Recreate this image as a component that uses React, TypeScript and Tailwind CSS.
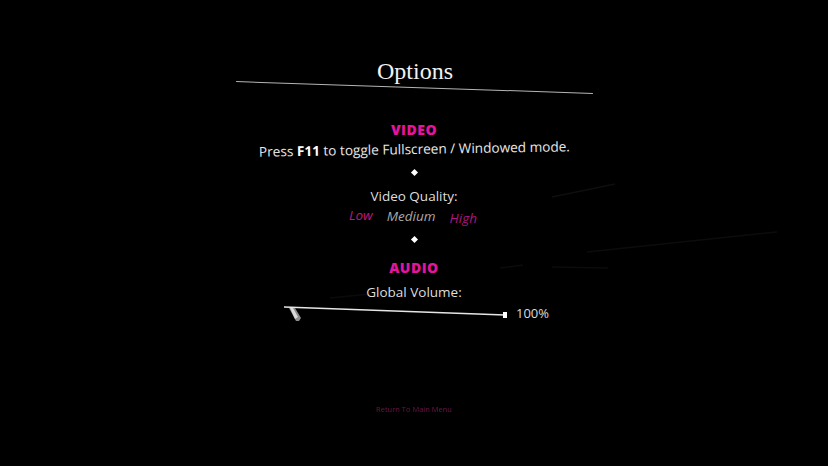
import React from 'react'

const sans = { fontFamily: '"Open Sans", "Noto Sans", sans-serif' }

// Faint streaks drawn on the backdrop canvas
const Streaks: React.FC = () => (
	<svg className="pointer-events-none absolute inset-0" width={828} height={466}>
		<line x1={552} y1={197} x2={615} y2={184} stroke="#0e0e0e" strokeWidth={1.5} />
		<line x1={587} y1={252} x2={777} y2={232} stroke="#0c0c0c" strokeWidth={1.5} />
		<line x1={500} y1={268} x2={523} y2={265} stroke="#0b0b0b" strokeWidth={1.5} />
		<line x1={552} y1={267} x2={608} y2={268} stroke="#0b0b0b" strokeWidth={1.5} />
		<line x1={330} y1={298} x2={370} y2={294} stroke="#0a0a0a" strokeWidth={1.5} />
	</svg>
)

const Diamond: React.FC<{ className?: string }> = ({ className }) => (
	<div className={`h-[5px] w-[5px] rotate-45 bg-white ${className ?? ''}`} />
)

const Heading: React.FC<{ children: React.ReactNode; className?: string }> = ({ children, className }) => (
	<div
		className={`flex h-[17px] items-center text-[14px] font-extrabold tracking-[0.5px] text-[#e4149c] ${className ?? ''}`}
		style={sans}
	>
		{children}
	</div>
)

const VolumeSlider: React.FC = () => (
	<div className="mt-[2px] flex h-[20px] items-center gap-[7px] pl-[4px]">
		<svg width={226} height={18} viewBox="0 0 226 18" className="mt-[-3px]">
			<line x1={1} y1={3} x2={222} y2={11} stroke="#e6e6e6" strokeWidth={1.3} />
			<rect x={220} y={8} width={4} height={6} fill="#fff" />
			{/* grab cursor */}
			<polygon points="6,4 12,4 18,14 16,17 13,17" fill="#8c8c8c" />
			<polygon points="7,4 10,4 15,13 12,15" fill="#dadada" />
		</svg>
		<span className="text-[13px] text-[#dcdcdc]" style={sans}>
			100%
		</span>
	</div>
)

export default function App() {
	return (
		<div className="relative h-[466px] w-[828px] overflow-hidden bg-black">
			<Streaks />
			<div className="relative flex flex-col items-center pt-[56px]">
				<div
					className="h-[30px] pl-[2px] text-[24px] leading-[30px] text-[#f2f2f2]"
					style={{ fontFamily: '"Liberation Serif", "DejaVu Serif", serif' }}
				>
					Options
				</div>
				<div className="ml-[1px] mt-[1px] h-px w-[357px] rotate-[1.9deg] bg-[#b5b5b5]" />

				<Heading className="mt-[33px]">VIDEO</Heading>
				<div
					className="mt-[3px] flex h-[16px] -rotate-[1deg] items-center text-[13.6px] leading-[16px] text-[#e8e8e8]"
					style={sans}
				>
					<span>
						Press <b className="font-bold text-white">F11</b> to toggle Fullscreen / Windowed mode.
					</span>
				</div>

				<Diamond className="mt-[13px]" />

				<div className="mt-[11px] flex h-[20px] items-center text-[13.5px] text-[#dedede]" style={sans}>
					Video Quality:
				</div>
				<div className="flex h-[20px] items-center gap-[14px] pr-[2px] text-[13.5px] italic" style={sans}>
					<span className="-translate-y-[1px] text-[#c0177c]">Low</span>
					<span className="text-[#a9a9a9]">Medium</span>
					<span className="translate-y-[2px] text-[#b0167f]">High</span>
				</div>

				<Diamond className="mt-[11px]" />

				<Heading className="mt-[17px]">AUDIO</Heading>
				<div className="mt-[6px] flex h-[20px] items-center text-[13.5px] text-[#dedede]" style={sans}>
					Global Volume:
				</div>
				<VolumeSlider />

				<div className="mt-[80px] text-[7.5px] text-[#6e1547] blur-[0.4px]" style={sans}>
					Return To Main Menu
				</div>
			</div>
		</div>
	)
}
